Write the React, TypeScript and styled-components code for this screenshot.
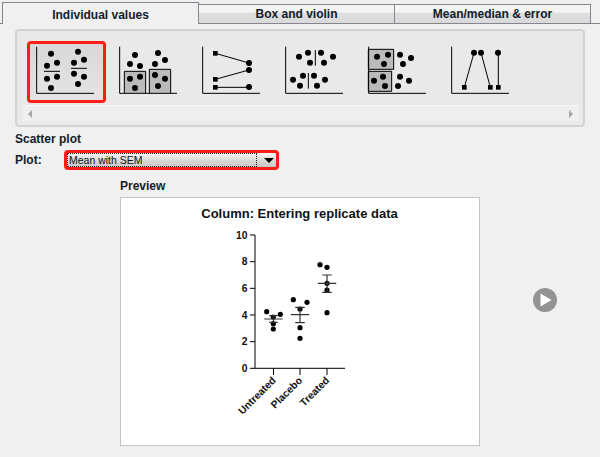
import styled, { createGlobalStyle } from 'styled-components'

const GlobalStyle = createGlobalStyle`
  html, body {
    margin: 0;
    padding: 0;
    background: #f0f0f0;
  }
`

type Pt = [number, number]

const tabs = ['Individual values', 'Box and violin', 'Mean/median & error']

const Dots = ({ pts, r = 9 }: { pts: Pt[]; r?: number }) => (
  <>
    {pts.map(([x, y], i) => (
      <circle key={i} cx={x} cy={y} r={r} fill="#000" />
    ))}
  </>
)

const Squares = ({ pts }: { pts: Pt[] }) => (
  <>
    {pts.map(([x, y], i) => (
      <rect key={i} x={x - 7} y={y - 7} width={14} height={14} fill="#000" />
    ))}
  </>
)

// thumbnails are drawn at 3x, origin at the top of the y axis
const Thumb = ({ children }: { children: React.ReactNode }) => (
  <ThumbSvg viewBox="-10 -8 198 160">
    {children}
    <path d="M1 0V140H173" fill="none" stroke="#000" strokeWidth={3} />
  </ThumbSvg>
)

const thumbs = [
  <Thumb key="scatter">
    <Dots pts={[[44, 21], [32, 57], [62, 48], [32, 96], [62, 90], [44, 124], [125, 15], [113, 48], [143, 39], [113, 81], [143, 90], [125, 112]]} />
    <path d="M23 74H71M104 65H152" stroke="#000" strokeWidth={3} />
  </Thumb>,
  <Thumb key="bars">
    <path d="M15 140V74H79V140M90 140V68H154V140" fill="#bbb" stroke="#000" strokeWidth={3} />
    <Dots pts={[[47, 25], [32, 52], [62, 58], [32, 96], [62, 90], [47, 124], [116, 19], [107, 52], [137, 40], [107, 85], [137, 96], [116, 118]]} />
  </Thumb>,
  <Thumb key="before-after">
    <path d="M39 20L140 49M39 98L140 70M39 122H140" stroke="#000" strokeWidth={3} />
    <Squares pts={[[39, 20], [39, 98], [39, 122]]} />
    <Dots pts={[[140, 49], [140, 70], [140, 121]]} />
  </Thumb>,
  <Thumb key="split">
    <Dots pts={[[41, 30], [68, 18], [74, 48], [107, 18], [116, 48], [143, 30], [23, 99], [53, 87], [44, 117], [86, 87], [95, 117], [119, 99]]} />
    <path d="M90 10V57M69 79V126" stroke="#000" strokeWidth={3} />
  </Thumb>,
  <Thumb key="box-split">
    <path d="M0 8H76V68H0ZM0 74H70V134H0Z" fill="#bbb" stroke="#000" strokeWidth={3} />
    <Dots pts={[[26, 30], [59, 24], [47, 52], [95, 24], [128, 34], [104, 52], [17, 102], [44, 90], [50, 118], [95, 90], [122, 102], [89, 118]]} />
  </Thumb>,
  <Thumb key="lines">
    <path d="M39 122L68 18M117 122L89 18M141 122V18" stroke="#000" strokeWidth={3} />
    <Squares pts={[[39, 122], [117, 122], [141, 122]]} />
    <Dots pts={[[68, 18], [89, 18], [140, 18]]} />
  </Thumb>,
]

const groups = [
  {
    name: 'Untreated',
    x: 273.5,
    pts: [[266.7, 311.7], [273.3, 317], [280.3, 314.3], [273.3, 323.7], [273.3, 329]] as Pt[],
    mean: 319,
    hi: 315.7,
    lo: 322.3,
    halfCap: 4.2,
  },
  {
    name: 'Placebo',
    x: 300,
    pts: [[293.3, 299.7], [307, 302.3], [300, 309], [300, 327.7], [300, 338.3]] as Pt[],
    mean: 314.7,
    hi: 307.3,
    lo: 322.7,
    halfCap: 4.8,
  },
  {
    name: 'Treated',
    x: 327,
    pts: [[320, 264.7], [327, 267.3], [327, 283.3], [327, 290], [327, 312.7]] as Pt[],
    mean: 283.3,
    hi: 275,
    lo: 292.3,
    halfCap: 4.8,
  },
]

const yTicks = [0, 2, 4, 6, 8, 10]
const yFor = (v: number) => 368.3 - v * 13.33

const Chart = () => (
  <ChartSvg viewBox="121 198 358 247">
    <ChartTitle x={299.5} y={217.5}>
      Column: Entering replicate data
    </ChartTitle>
    <path d="M255 235V368.3H345" fill="none" stroke="#000" strokeWidth={1} />
    {yTicks.map((t) => (
      <g key={t}>
        <path d={`M250 ${yFor(t)}H255`} stroke="#000" />
        <AxisText x={247.5} y={yFor(t) + 3.8} textAnchor="end">
          {t}
        </AxisText>
      </g>
    ))}
    {groups.map((g) => (
      <g key={g.name}>
        <path d={`M${g.x} 368.3V375`} stroke="#000" />
        <AxisText x={g.x + 3} y={381} textAnchor="end" transform={`rotate(-45 ${g.x + 3} 381)`}>
          {g.name}
        </AxisText>
        <Dots pts={g.pts} r={2.6} />
        <path
          d={`M${g.x - 9.2} ${g.mean}H${g.x + 9.2}M${g.x} ${g.hi}V${g.lo}M${g.x - g.halfCap} ${g.hi}H${g.x + g.halfCap}M${g.x - g.halfCap} ${g.lo}H${g.x + g.halfCap}`}
          stroke="#333"
          strokeWidth={1.2}
          fill="none"
        />
      </g>
    ))}
  </ChartSvg>
)

export default function App() {
  return (
    <Page>
      <GlobalStyle />
      <TabBar>
        {tabs.map((t, i) => (
          <Tab key={t} $active={i === 0}>
            {t}
          </Tab>
        ))}
      </TabBar>
      <Gallery>
        <ThumbRow>
          {thumbs.map((t, i) => (
            <ThumbCell key={i} $selected={i === 0}>
              {t}
            </ThumbCell>
          ))}
        </ThumbRow>
        <ScrollTrack>
          <ScrollArrow $dir="left" />
          <ScrollArrow $dir="right" />
        </ScrollTrack>
      </Gallery>
      <SectionTitle>Scatter plot</SectionTitle>
      <PlotRow>
        <PlotLabel>Plot:</PlotLabel>
        <Select>
          <SelectValue>Mean with SEM</SelectValue>
          <SelectCaret />
        </Select>
      </PlotRow>
      <PreviewTitle>Preview</PreviewTitle>
      <PreviewRow>
        <PreviewBox>
          <Chart />
        </PreviewBox>
        <PlayButton viewBox="0 0 24 24">
          <circle cx={12} cy={12} r={12} fill="#939393" />
          <path d="M7.5 5.5L18.5 12L7.5 18.5Z" fill="#fff" />
        </PlayButton>
      </PreviewRow>
    </Page>
  )
}

const Page = styled.div`
  width: 600px;
  height: 457px;
  overflow: hidden;
  background: #f0f0f0;
  font-family: 'Liberation Sans', Arial, sans-serif;
  color: #000;
`

const TabBar = styled.div`
  display: flex;
  align-items: flex-end;
  height: 24px;
  padding: 0 9px 0 2px;
  border-bottom: 1px solid #85858f;
  box-sizing: border-box;
  background: #f0f0f0;
`

const Tab = styled.div<{ $active?: boolean }>`
  box-sizing: border-box;
  flex: 0 0 197px;
  margin-left: ${(p) => (p.$active ? '0' : '-1px')};
  text-align: center;
  font-size: 12px;
  font-weight: 700;
  color: #10202c;
  border: 1px solid #85858f;
  border-bottom: 0;
  height: ${(p) => (p.$active ? '22px' : '19px')};
  line-height: ${(p) => (p.$active ? '24px' : '19px')};
  margin-bottom: ${(p) => (p.$active ? '-1px' : '0')};
  background: ${(p) =>
    p.$active ? '#f0f0f0' : 'linear-gradient(#f4f4f4 0 40%, #dedede 45%, #d9d9d9 100%)'};
  position: relative;
  z-index: ${(p) => (p.$active ? 1 : 0)};
`

const Gallery = styled.div`
  box-sizing: border-box;
  margin: 5px 15px 0;
  height: 98px;
  padding: 10px 5px 0;
  background: #e9e9e9;
  border: 2px solid #d2d2d2;
  border-radius: 4px;
`

const ThumbRow = styled.div`
  display: flex;
  gap: 4px;
  padding-left: 5px;
  height: 62px;
`

const ThumbCell = styled.div<{ $selected?: boolean }>`
  box-sizing: border-box;
  width: 79px;
  height: 62px;
  padding-left: 3px;
  border: 3px solid ${(p) => (p.$selected ? '#fa1e14' : 'transparent')};
  border-radius: 4px;
  background: ${(p) => (p.$selected ? 'linear-gradient(#d8d8d8, #e4e4e4)' : 'transparent')};
`

const ThumbSvg = styled.svg`
  display: block;
  width: 66px;
  height: 53.33px;
`

const ScrollTrack = styled.div`
  box-sizing: border-box;
  display: flex;
  align-items: center;
  justify-content: space-between;
  height: 16px;
  margin: 2px -1px 0 0;
  padding: 0 6px;
  background: #efefef;
  border-top: 1px solid #f8f8f8;
`

const ScrollArrow = styled.div<{ $dir: 'left' | 'right' }>`
  width: 0;
  height: 0;
  border-top: 4px solid transparent;
  border-bottom: 4px solid transparent;
  border-left: ${(p) => (p.$dir === 'right' ? '4px solid #a8a8a8' : '0')};
  border-right: ${(p) => (p.$dir === 'left' ? '4px solid #a8a8a8' : '0')};
`

const SectionTitle = styled.div`
  margin: 5px 0 0 15px;
  font-size: 12px;
  font-weight: 700;
  line-height: 14px;
  color: #10202c;
`

const PlotRow = styled.div`
  display: flex;
  align-items: center;
  margin: 4px 0 0 15px;
`

const PlotLabel = styled.div`
  width: 49px;
  font-size: 12px;
  font-weight: 700;
  color: #10202c;
`

const Select = styled.div`
  box-sizing: border-box;
  display: flex;
  width: 215px;
  height: 20px;
  border: 3px solid #fa1e14;
  border-radius: 4px;
  background: linear-gradient(#f6f6f6, #d8d8d8 55%, #c6c6c6);
`

const SelectValue = styled.div`
  flex: 1;
  box-sizing: border-box;
  height: 14px;
  font-size: 10.5px;
  line-height: 13px;
  padding-left: 1px;
  border: 1px dotted #222;
  color: #111;
`

const SelectCaret = styled.div`
  width: 0;
  height: 0;
  margin: 5px 2px 0 7px;
  border-left: 5px solid transparent;
  border-right: 5px solid transparent;
  border-top: 5px solid #000;
`

const PreviewTitle = styled.div`
  margin: 9px 0 0 120px;
  font-size: 12px;
  font-weight: 700;
  line-height: 14px;
  color: #10202c;
`

const PreviewRow = styled.div`
  display: flex;
  align-items: flex-start;
  margin: 4px 0 0 120px;
`

const PreviewBox = styled.div`
  box-sizing: border-box;
  width: 360px;
  height: 249px;
  background: #fff;
  border: 1px solid #c4c4c4;
`

const ChartSvg = styled.svg`
  display: block;
  width: 358px;
  height: 247px;
`

const ChartTitle = styled.text`
  font-family: 'Liberation Sans', Arial, sans-serif;
  font-size: 13px;
  font-weight: 700;
  text-anchor: middle;
  fill: #111;
`

const AxisText = styled.text`
  font-family: 'Liberation Sans', Arial, sans-serif;
  font-size: 10.3px;
  font-weight: 700;
  fill: #111;
`

const PlayButton = styled.svg`
  width: 24px;
  height: 24px;
  margin: 91px 0 0 53px;
`
